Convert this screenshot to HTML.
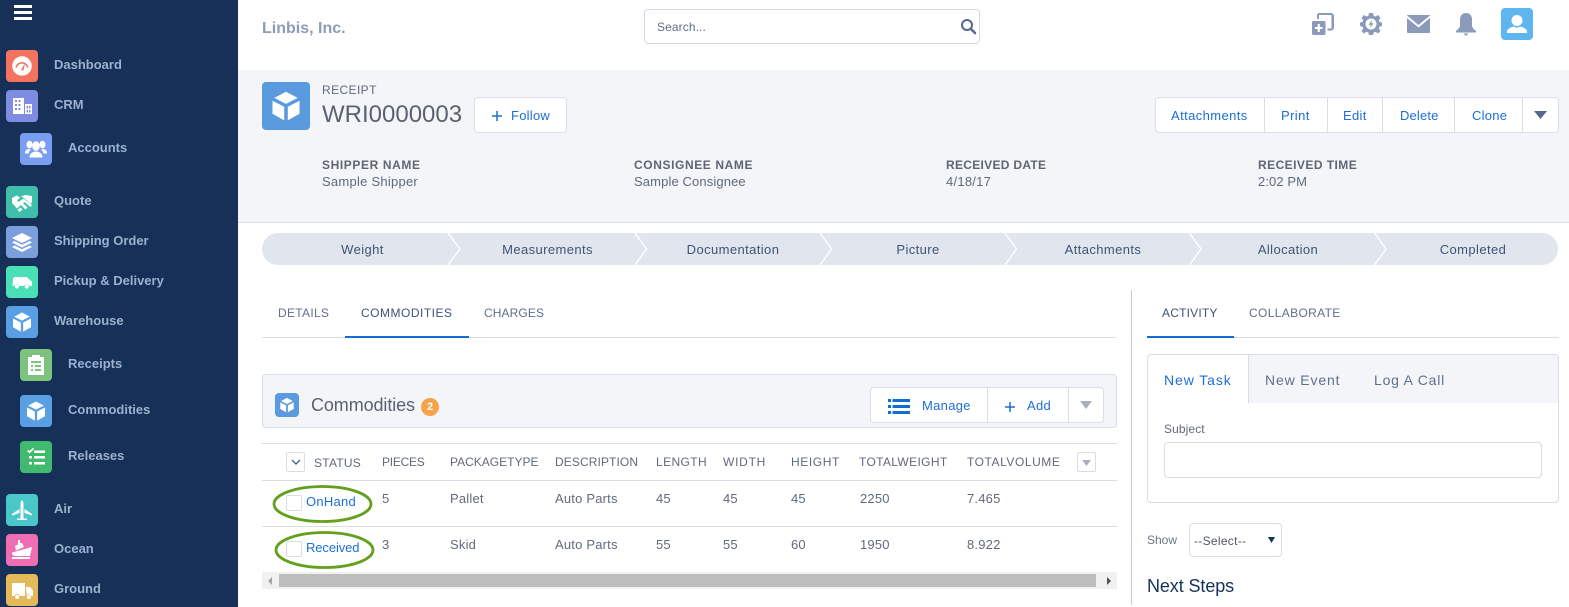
<!DOCTYPE html>
<html lang="en">
<head>
<meta charset="utf-8">
<title>Receipt WRI0000003</title>
<style>
html,body{margin:0;padding:0;width:1569px;height:607px;overflow:hidden;background:#fff;font-family:"Liberation Sans",sans-serif;color:#54698d}
.a{position:absolute;box-sizing:border-box}
.t{position:absolute;white-space:nowrap;line-height:16px;height:16px;font-size:13px;letter-spacing:.25px}
.nav{color:#9db0cf;font-weight:bold;font-size:13px;letter-spacing:0}
.ic{position:absolute;width:32px;height:32px;border-radius:4px}
.ic svg{position:absolute;left:0;top:0;width:32px;height:32px;fill:#fff}
.lb{font-weight:bold;font-size:12px;letter-spacing:.6px;color:#5f6672}
.val{color:#5f6a7c}
.blue{color:#1b6fd6}
.th{font-size:12px;letter-spacing:.75px;color:#5f6a7c}
.td{color:#5f6a7c;font-size:13px;letter-spacing:.2px}
.step{color:#3f5478;font-size:13px;letter-spacing:.4px;transform:translateX(-50%)}
.tab{font-size:12px;letter-spacing:.6px;color:#5f6f8c}
</style>
</head>
<body>
<svg width="0" height="0" style="position:absolute">
<defs>
<symbol id="cube" viewBox="0 0 32 32">
<path d="M16 6.500 23.800 10.600 16 14.600 8.200 10.600Z"/>
<path d="M7 12.500 14.800 16.500V25.600L7 21.200Z"/>
<path d="M25 12.500 17.200 16.500V25.600L25 21.200Z"/>
</symbol>
</defs>
</svg>

<!-- Sidebar -->
<div class="a" style="left:0;top:0;width:238px;height:607px;background:#163057"></div>
<div class="a" style="left:14px;top:5px;width:18px;height:2.500px;background:#fff"></div>
<div class="a" style="left:14px;top:11px;width:18px;height:2.500px;background:#fff"></div>
<div class="a" style="left:14px;top:17px;width:18px;height:2.500px;background:#fff"></div>

<div class="ic" style="left:6px;top:50px;background:#f4735f"><svg viewBox="0 0 32 32"><circle cx="16" cy="16" r="9.800"/><path d="M10 17.500A6.200 6.200 0 0 1 22 17.500" fill="none" stroke="#f4735f" stroke-width="1.600"/><path d="M19 13 17.500 20.500 15 20 Z" fill="#f4735f"/></svg></div>
<div class="t nav" style="left:54px;top:57px">Dashboard</div>

<div class="ic" style="left:6px;top:90px;background:#7f8de1"><svg viewBox="0 0 32 32"><path fill-rule="evenodd" d="M7 8H18V24H7ZM9 10V12H11V10ZM12.500 10V12H14.500V10ZM9 14V16H11V14ZM12.500 14V16H14.500V14ZM9 18V20H11V18ZM12.500 18V20H14.500V18Z"/><path fill-rule="evenodd" d="M19 14H26V24H19ZM20.500 16V18.500H22V16ZM23 16V18.500H24.500V16ZM20.500 20V22.500H22V20ZM23 20V22.500H24.500V20Z"/></svg></div>
<div class="t nav" style="left:54px;top:97px">CRM</div>

<div class="ic" style="left:20px;top:133px;background:#7a9df0"><svg viewBox="0 0 32 32"><ellipse cx="16" cy="13" rx="3.800" ry="4.800"/><path d="M9.500 24.500c0-3.500 2.500-6 6.500-6s6.500 2.500 6.500 6Z"/><ellipse cx="9.500" cy="11.500" rx="3" ry="3.800"/><path d="M5 20.500c0-3 1.500-4.500 4.500-4.500l1.500.8c-1.300 1-2.200 2-2.400 3.700Z"/><ellipse cx="22.500" cy="11.500" rx="3" ry="3.800"/><path d="M27 20.500c0-3-1.500-4.500-4.500-4.500l-1.500.8c1.300 1 2.200 2 2.400 3.700Z"/></svg></div>
<div class="t nav" style="left:68px;top:140px">Accounts</div>

<div class="ic" style="left:6px;top:186px;background:#3fbfa9"><svg viewBox="0 0 32 32"><path d="M6 12 10.500 9.500 14 11.500 11 14.500 12.500 16 17.500 12.500 26 19 24.500 21 18.500 16 17 17 21.500 21.500 19.500 23.500 15 19 11 22.500 6 17Z"/><path d="M15 10.500 19 9 26 10V16.500L24.500 17.500 18 12Z"/><path d="M11.500 24 14.500 21.500 16.500 23.500 13.500 26Z"/></svg></div>
<div class="t nav" style="left:54px;top:193px">Quote</div>

<div class="ic" style="left:6px;top:226px;background:#7b9fdc"><svg viewBox="0 0 32 32"><path d="M16 7 26 12 16 17 6 12Z"/><path d="M8.500 15 16 18.800 23.500 15 26 16.500 16 21.500 6 16.500Z"/><path d="M8.500 19.500 16 23.300 23.500 19.500 26 21 16 26 6 21Z"/></svg></div>
<div class="t nav" style="left:54px;top:233px">Shipping Order</div>

<div class="ic" style="left:6px;top:266px;background:#4ae0b6"><svg viewBox="0 0 32 32"><path fill-rule="evenodd" d="M7 13C7 11.800 8 11 9.500 11H20.500L24 14 26 15.500V20H23.500A3 3 0 0 0 18 20H13.500A3 3 0 0 0 8 20H6.500ZM10.800 18.500a2 2 0 1 1 0 4 2 2 0 0 1 0-4ZM20.800 18.500a2 2 0 1 1 0 4 2 2 0 0 1 0-4Z"/></svg></div>
<div class="t nav" style="left:54px;top:273px">Pickup &amp; Delivery</div>

<div class="ic" style="left:6px;top:306px;background:#5a9fe3"><svg><use href="#cube"/></svg></div>
<div class="t nav" style="left:54px;top:313px">Warehouse</div>

<div class="ic" style="left:20px;top:349px;background:#7dc37d"><svg viewBox="0 0 32 32"><path fill-rule="evenodd" d="M12 6H20V8H24V26H8V8H12ZM11 12V14H21V12ZM11 16V18H13V16ZM15 16V18H21V16ZM11 20V22H13V20ZM15 20V22H21V20Z"/></svg></div>
<div class="t nav" style="left:68px;top:356px">Receipts</div>

<div class="ic" style="left:20px;top:395px;background:#5a9fe3"><svg><use href="#cube"/></svg></div>
<div class="t nav" style="left:68px;top:402px">Commodities</div>

<div class="ic" style="left:20px;top:441px;background:#3fba6f"><svg viewBox="0 0 32 32"><path d="M7 10 8.300 8.800 9.500 10 13 6.800 14 8 9.500 12.500Z"/><rect x="14" y="9.500" width="11" height="2.500"/><rect x="9" y="15" width="3" height="2.500"/><rect x="14" y="15" width="11" height="2.500"/><rect x="9" y="21" width="3" height="2.500"/><rect x="14" y="21" width="11" height="2.500"/></svg></div>
<div class="t nav" style="left:68px;top:448px">Releases</div>

<div class="ic" style="left:6px;top:494px;background:#4ac7c9"><svg viewBox="0 0 32 32"><path d="M16 6C17 7 17.500 8.500 17.500 10V24.500H21V26H11V24.500H14.500V10C14.500 8.500 15 7 16 6Z"/><path d="M13.500 15V19L6 21.500V20Z"/><path d="M18.500 15V19L26 21.500V20Z"/></svg></div>
<div class="t nav" style="left:54px;top:501px">Air</div>

<div class="ic" style="left:6px;top:534px;background:#ef6eb3"><svg viewBox="0 0 32 32"><path d="M12 6H14V9H16L18 13 10 16.500 9 12 12 10.500Z"/><path d="M26 13 24 22 H8L6 20 6 18.500Z"/><path d="M6 23H24V25H6Z"/></svg></div>
<div class="t nav" style="left:54px;top:541px">Ocean</div>

<div class="ic" style="left:6px;top:574px;background:#e4b95a"><svg viewBox="0 0 32 32"><path d="M6 9H19V22H14A3 3 0 0 0 8.500 22H6Z"/><path d="M20 13H24L27 16.500V22H25A3 3 0 0 0 20.500 21Z"/><circle cx="11.200" cy="23" r="2"/><circle cx="22.800" cy="23" r="2"/></svg></div>
<div class="t nav" style="left:54px;top:581px">Ground</div>

<!-- Top bar -->
<div class="t" style="left:262px;top:21px;font-size:16px;font-weight:bold;color:#8f9bb5;letter-spacing:0">Linbis, Inc.</div>
<div class="a" style="left:644px;top:9px;width:336px;height:35px;border:1px solid #d3d8e4;border-radius:4px;background:#fff"></div>
<div class="t" style="left:657px;top:19px;font-size:12px;color:#5f6f8c;letter-spacing:.1px">Search...</div>
<svg class="a" style="left:960px;top:18px" width="17" height="17" viewBox="0 0 17 17"><circle cx="7" cy="7" r="5" fill="none" stroke="#54698d" stroke-width="2"/><path d="M10.800 10.800 15 15" stroke="#54698d" stroke-width="2.500" stroke-linecap="round"/></svg>

<svg class="a" style="left:1310px;top:12px" width="24" height="24" viewBox="0 0 24 24" fill="#8a9ab8"><path fill-rule="evenodd" d="M2 10.500C2 9.500 2.500 9 3.500 9H14C15 9 15.500 9.500 15.500 10.500V21.500C15.500 22.500 15 23 14 23H3.500C2.500 23 2 22.500 2 21.500ZM7.700 12V15H5V17H7.700V20H9.800V17H12.500V15H9.800V12Z"/><path d="M7 7V3.500C7 2 8 1 9.500 1H20.500C22 1 24 2 24 3.500V16C24 17.500 22 18.500 20.500 18.500H17.500V16.500H21.500V3H9V7Z"/></svg>
<svg class="a" style="left:1360px;top:13px" width="22" height="22" viewBox="0 0 22 22" fill="#8a9ab8"><path fill-rule="evenodd" d="M9 0H13L13.600 2.800 15.500 3.600 18 2 20.500 5 18.800 7.300 19.500 9 22 9.500V13L19.500 13.600 18.800 15.500 20.500 18 18 20.500 15.500 18.800 13.600 19.500 13 22H9L8.400 19.500 6.500 18.800 4 20.500 1.500 18 3.200 15.500 2.500 13.600 0 13V9.500L2.500 9 3.200 7.300 1.500 5 4 2 6.500 3.600 8.400 2.800ZM11 5.500A5.500 5.500 0 1 0 11 16.500 5.500 5.500 0 0 0 11 5.500ZM12 7 8.500 11.800H10.700L10 15 13.500 10.200H11.300Z"/></svg>
<svg class="a" style="left:1406.500px;top:15px" width="23" height="18" viewBox="0 0 23 18" fill="#8a9ab8"><path d="M1 0H22C22.500 0 22.800.2 23 .5L11.500 10 0 .5C.2.200.5 0 1 0Z"/><path d="M0 3 11.500 12.500 23 3V17C23 17.600 22.600 18 22 18H1C.4 18 0 17.600 0 17Z"/></svg>
<svg class="a" style="left:1454px;top:12px" width="24" height="24" viewBox="0 0 24 24" fill="#8a9ab8"><path d="M12 1C16 1 18 4 18 7.500V13C18 15.500 19.500 17 21.500 18.500C22.500 19.200 22.300 20.500 21 20.500H3C1.700 20.500 1.500 19.200 2.500 18.500C4.500 17 6 15.500 6 13V7.500C6 4 8 1 12 1Z"/><path d="M9.500 21.500H14.500L12 24Z"/></svg>
<div class="a" style="left:1500.500px;top:8px;width:32px;height:32px;border-radius:4px;background:#5eb5f0"><svg style="position:absolute;left:0;top:0" width="32" height="32" viewBox="0 0 32 32" fill="#fff"><circle cx="16" cy="12.500" r="5.500"/><path d="M6 25V23.500C6 21 10 19 13 18.500 15 20 17 20 19 18.500 22 19 26 21 26 23.500V25Z"/></svg></div>

<!-- Record header -->
<div class="a" style="left:238px;top:70px;width:1331px;height:153px;background:#f3f5f9;border-bottom:1px solid #d8dde6"></div>
<div class="a" style="left:262px;top:82px;width:48px;height:48px;border-radius:4px;background:#5a9be0"><svg style="position:absolute;left:0;top:0;fill:#fff" width="48" height="48"><use href="#cube"/></svg></div>
<div class="t" style="left:322px;top:82px;font-size:12px;letter-spacing:.4px;color:#5f6a7c">RECEIPT</div>
<div class="t" style="left:322px;top:102px;height:26px;line-height:26px;font-size:24px;letter-spacing:0;color:#5a6270">WRI0000003</div>
<div class="a" style="left:474px;top:97px;width:93px;height:36px;border:1px solid #d8dde6;border-radius:4px;background:#fff"></div>
<svg class="a" style="left:491px;top:110px" width="12" height="12"><path d="M6 1V11M1 6H11" stroke="#1b6fd6" stroke-width="1.500"/></svg>
<div class="t blue" style="left:511px;top:108px">Follow</div>

<div class="a" style="left:1155px;top:97px;width:404px;height:36px;border:1px solid #d8dde6;border-radius:4px;background:#fff"></div>
<div class="a" style="left:1264px;top:97px;width:1px;height:36px;background:#d8dde6"></div>
<div class="a" style="left:1327px;top:97px;width:1px;height:36px;background:#d8dde6"></div>
<div class="a" style="left:1382px;top:97px;width:1px;height:36px;background:#d8dde6"></div>
<div class="a" style="left:1454px;top:97px;width:1px;height:36px;background:#d8dde6"></div>
<div class="a" style="left:1522px;top:97px;width:1px;height:36px;background:#d8dde6"></div>
<div class="t blue" style="left:1171px;top:108px;letter-spacing:.4px">Attachments</div>
<div class="t blue" style="left:1281px;top:108px;letter-spacing:.4px">Print</div>
<div class="t blue" style="left:1343px;top:108px;letter-spacing:.3px">Edit</div>
<div class="t blue" style="left:1400px;top:108px;letter-spacing:.15px">Delete</div>
<div class="t blue" style="left:1472px;top:108px">Clone</div>
<svg class="a" style="left:1534px;top:111px" width="13" height="9"><path d="M0 0H13L6.500 8Z" fill="#54698d"/></svg>

<div class="t lb" style="left:322px;top:157px">SHIPPER NAME</div>
<div class="t val" style="left:322px;top:174px">Sample Shipper</div>
<div class="t lb" style="left:634px;top:157px">CONSIGNEE NAME</div>
<div class="t val" style="left:634px;top:174px;letter-spacing:.12px">Sample Consignee</div>
<div class="t lb" style="left:946px;top:157px;letter-spacing:.3px">RECEIVED DATE</div>
<div class="t val" style="left:946px;top:174px">4/18/17</div>
<div class="t lb" style="left:1258px;top:157px;letter-spacing:.45px">RECEIVED TIME</div>
<div class="t val" style="left:1258px;top:174px;letter-spacing:.1px">2:02 PM</div>

<!-- Path -->
<div class="a" style="left:262px;top:233px;width:1296px;height:32px;border-radius:16px;background:#e0e5ee"></div>
<svg class="a" style="left:262px;top:233px" width="1296" height="32" fill="none" stroke="#fff" stroke-width="1.400">
<path d="M186 0 198 16 186 32M373 0 384.500 16 373 32M558 0 569.500 16 558 32M743 0 754.500 16 743 32M927.500 0 939 16 927.500 32M1112.500 0 1124 16 1112.500 32"/>
</svg>
<div class="t step" style="left:362.500px;top:242px">Weight</div>
<div class="t step" style="left:547.500px;top:242px">Measurements</div>
<div class="t step" style="left:733px;top:242px">Documentation</div>
<div class="t step" style="left:918px;top:242px">Picture</div>
<div class="t step" style="left:1103px;top:242px">Attachments</div>
<div class="t step" style="left:1288px;top:242px">Allocation</div>
<div class="t step" style="left:1473px;top:242px">Completed</div>

<!-- Left tabs -->
<div class="t tab" style="left:278px;top:305px;letter-spacing:.3px">DETAILS</div>
<div class="t tab" style="left:361px;top:305px;color:#3f5478;letter-spacing:.5px">COMMODITIES</div>
<div class="t tab" style="left:484px;top:305px;letter-spacing:.1px">CHARGES</div>
<div class="a" style="left:262px;top:337px;width:854px;height:1px;background:#d8dde6"></div>
<div class="a" style="left:345px;top:335.500px;width:124px;height:2px;background:#0f6fd0"></div>

<!-- Divider -->
<div class="a" style="left:1130.500px;top:290px;width:1.500px;height:315px;background:#c9ccd2"></div>

<!-- Commodities panel -->
<div class="a" style="left:262px;top:374px;width:855px;height:54px;background:#f3f5f9;border:1px solid #d8dde6;border-radius:4px"></div>
<div class="a" style="left:275px;top:393px;width:24px;height:24px;border-radius:4px;background:#5a9be0"><svg style="position:absolute;left:0;top:0;fill:#fff" width="24" height="24"><use href="#cube"/></svg></div>
<div class="t" style="left:311px;top:395px;height:20px;line-height:20px;font-size:18px;letter-spacing:-.1px;color:#5a6270">Commodities</div>
<div class="a" style="left:421px;top:398px;width:18px;height:18px;border-radius:50%;background:#f8a34a;color:#fff;font-size:11px;font-weight:bold;text-align:center;line-height:18px">2</div>

<div class="a" style="left:870px;top:387px;width:234px;height:36px;border:1px solid #d8dde6;border-radius:4px;background:#fff"></div>
<div class="a" style="left:987px;top:387px;width:1px;height:36px;background:#d8dde6"></div>
<div class="a" style="left:1068px;top:387px;width:1px;height:36px;background:#d8dde6"></div>
<svg class="a" style="left:888px;top:399px" width="23" height="16" fill="#0f6fd0"><rect x="0" y="0" width="3" height="3"/><rect x="4.500" y="0" width="17.500" height="3"/><rect x="0" y="6" width="3" height="3"/><rect x="4.500" y="6" width="17.500" height="3"/><rect x="0" y="12" width="3" height="3"/><rect x="4.500" y="12" width="17.500" height="3"/></svg>
<div class="t blue" style="left:922px;top:398px;letter-spacing:.3px">Manage</div>
<svg class="a" style="left:1004px;top:401px" width="12" height="12"><path d="M6 1V11M1 6H11" stroke="#1b6fd6" stroke-width="1.500"/></svg>
<div class="t blue" style="left:1027px;top:398px;letter-spacing:.3px">Add</div>
<svg class="a" style="left:1080px;top:401px" width="12" height="9"><path d="M0 0H12L6 8Z" fill="#a9afbb"/></svg>

<!-- Table -->
<div class="a" style="left:262px;top:443px;width:855px;height:1px;background:#d8dde6"></div>
<div class="a" style="left:262px;top:480px;width:855px;height:1px;background:#d8dde6"></div>
<div class="a" style="left:262px;top:526px;width:855px;height:1px;background:#d8dde6"></div>
<div class="a" style="left:286px;top:452px;width:19px;height:20px;border:1px solid #d8dde6;border-radius:2px"></div>
<svg class="a" style="left:291px;top:459px" width="10" height="7"><path d="M1 1 5 5 9 1" fill="none" stroke="#54698d" stroke-width="1.500"/></svg>
<div class="t th" style="left:314px;top:455px;letter-spacing:.25px">STATUS</div>
<div class="t th" style="left:382px;top:454px;letter-spacing:-.25px">PIECES</div>
<div class="t th" style="left:450px;top:454px;letter-spacing:0">PACKAGETYPE</div>
<div class="t th" style="left:555px;top:454px;letter-spacing:.1px">DESCRIPTION</div>
<div class="t th" style="left:656px;top:454px;letter-spacing:.4px">LENGTH</div>
<div class="t th" style="left:723px;top:454px">WIDTH</div>
<div class="t th" style="left:791px;top:454px;letter-spacing:.6px">HEIGHT</div>
<div class="t th" style="left:859px;top:454px;letter-spacing:.35px">TOTALWEIGHT</div>
<div class="t th" style="left:967px;top:454px;letter-spacing:.55px">TOTALVOLUME</div>
<div class="a" style="left:1077px;top:452px;width:19px;height:20px;border:1px solid #d8dde6;border-radius:2px"></div>
<svg class="a" style="left:1082px;top:460px" width="9" height="6"><path d="M0 0H9L4.500 6Z" fill="#a9afbb"/></svg>

<div class="a" style="left:286px;top:495px;width:16px;height:16px;border:1px solid #d8dde6;border-radius:2px"></div>
<div class="t blue" style="left:306px;top:494px">OnHand</div>
<div class="t td" style="left:382px;top:491px">5</div>
<div class="t td" style="left:450px;top:491px">Pallet</div>
<div class="t td" style="left:555px;top:491px">Auto Parts</div>
<div class="t td" style="left:656px;top:491px">45</div>
<div class="t td" style="left:723px;top:491px">45</div>
<div class="t td" style="left:791px;top:491px">45</div>
<div class="t td" style="left:860px;top:491px">2250</div>
<div class="t td" style="left:967px;top:491px">7.465</div>

<div class="a" style="left:286px;top:541px;width:16px;height:16px;border:1px solid #d8dde6;border-radius:2px"></div>
<div class="t blue" style="left:306px;top:540px;letter-spacing:-.1px">Received</div>
<div class="t td" style="left:382px;top:537px">3</div>
<div class="t td" style="left:450px;top:537px">Skid</div>
<div class="t td" style="left:555px;top:537px">Auto Parts</div>
<div class="t td" style="left:656px;top:537px">55</div>
<div class="t td" style="left:723px;top:537px">55</div>
<div class="t td" style="left:791px;top:537px">60</div>
<div class="t td" style="left:860px;top:537px">1950</div>
<div class="t td" style="left:967px;top:537px">8.922</div>

<svg class="a" style="left:262px;top:480px" width="130" height="100" fill="none" stroke="#64a01e" stroke-width="2.800">
<ellipse cx="60.500" cy="24" rx="48.500" ry="17.500"/>
<ellipse cx="62.500" cy="70" rx="48.500" ry="17.500"/>
</svg>

<!-- Scrollbar -->
<div class="a" style="left:262px;top:572px;width:855px;height:17px;background:#f1f1f1"></div>
<div class="a" style="left:279px;top:574px;width:817px;height:13px;background:#bdbdbd"></div>
<svg class="a" style="left:268px;top:577px" width="6" height="8"><path d="M4 0V8L0 4Z" fill="#a3a3a3"/></svg>
<svg class="a" style="left:1107px;top:577px" width="6" height="8"><path d="M0 0V8L4 4Z" fill="#505050"/></svg>

<!-- Right column -->
<div class="t tab" style="left:1162px;top:305px;color:#3f5478;letter-spacing:.2px">ACTIVITY</div>
<div class="t tab" style="left:1249px;top:305px;letter-spacing:.35px">COLLABORATE</div>
<div class="a" style="left:1147px;top:337px;width:412px;height:1px;background:#d8dde6"></div>
<div class="a" style="left:1147px;top:335.500px;width:87px;height:2px;background:#0f6fd0"></div>

<div class="a" style="left:1147px;top:354px;width:412px;height:149px;border:1px solid #d8dde6;border-radius:4px;background:#fff"></div>
<div class="a" style="left:1248px;top:355px;width:310px;height:48px;background:#f3f5f9;border-left:1px solid #d8dde6;border-top-right-radius:4px"></div>
<div class="t blue" style="left:1164px;top:372px;font-size:14px;letter-spacing:.9px">New Task</div>
<div class="t" style="left:1265px;top:372px;font-size:14px;letter-spacing:.85px;color:#5f6f8c">New Event</div>
<div class="t" style="left:1374px;top:372px;font-size:14px;letter-spacing:.8px;color:#5f6f8c">Log A Call</div>
<div class="t" style="left:1164px;top:421px;font-size:12px;letter-spacing:.1px;color:#5f6a7c">Subject</div>
<div class="a" style="left:1164px;top:442px;width:378px;height:36px;border:1px solid #d8dde6;border-radius:4px;background:#fff"></div>

<div class="t" style="left:1147px;top:532px;font-size:12px;letter-spacing:0;color:#6a7688">Show</div>
<div class="a" style="left:1189px;top:523px;width:93px;height:34px;border:1px solid #d8dde6;border-radius:4px;background:#fff"></div>
<div class="t" style="left:1194px;top:533px;font-size:12px;letter-spacing:.3px;color:#4a5568">--Select--</div>
<svg class="a" style="left:1268px;top:537px" width="7" height="6"><path d="M0 0H7L3.500 6Z" fill="#16325c"/></svg>
<div class="t" style="left:1147px;top:576px;height:20px;line-height:20px;font-size:18px;letter-spacing:-.1px;color:#16325c">Next Steps</div>
</body>
</html>
